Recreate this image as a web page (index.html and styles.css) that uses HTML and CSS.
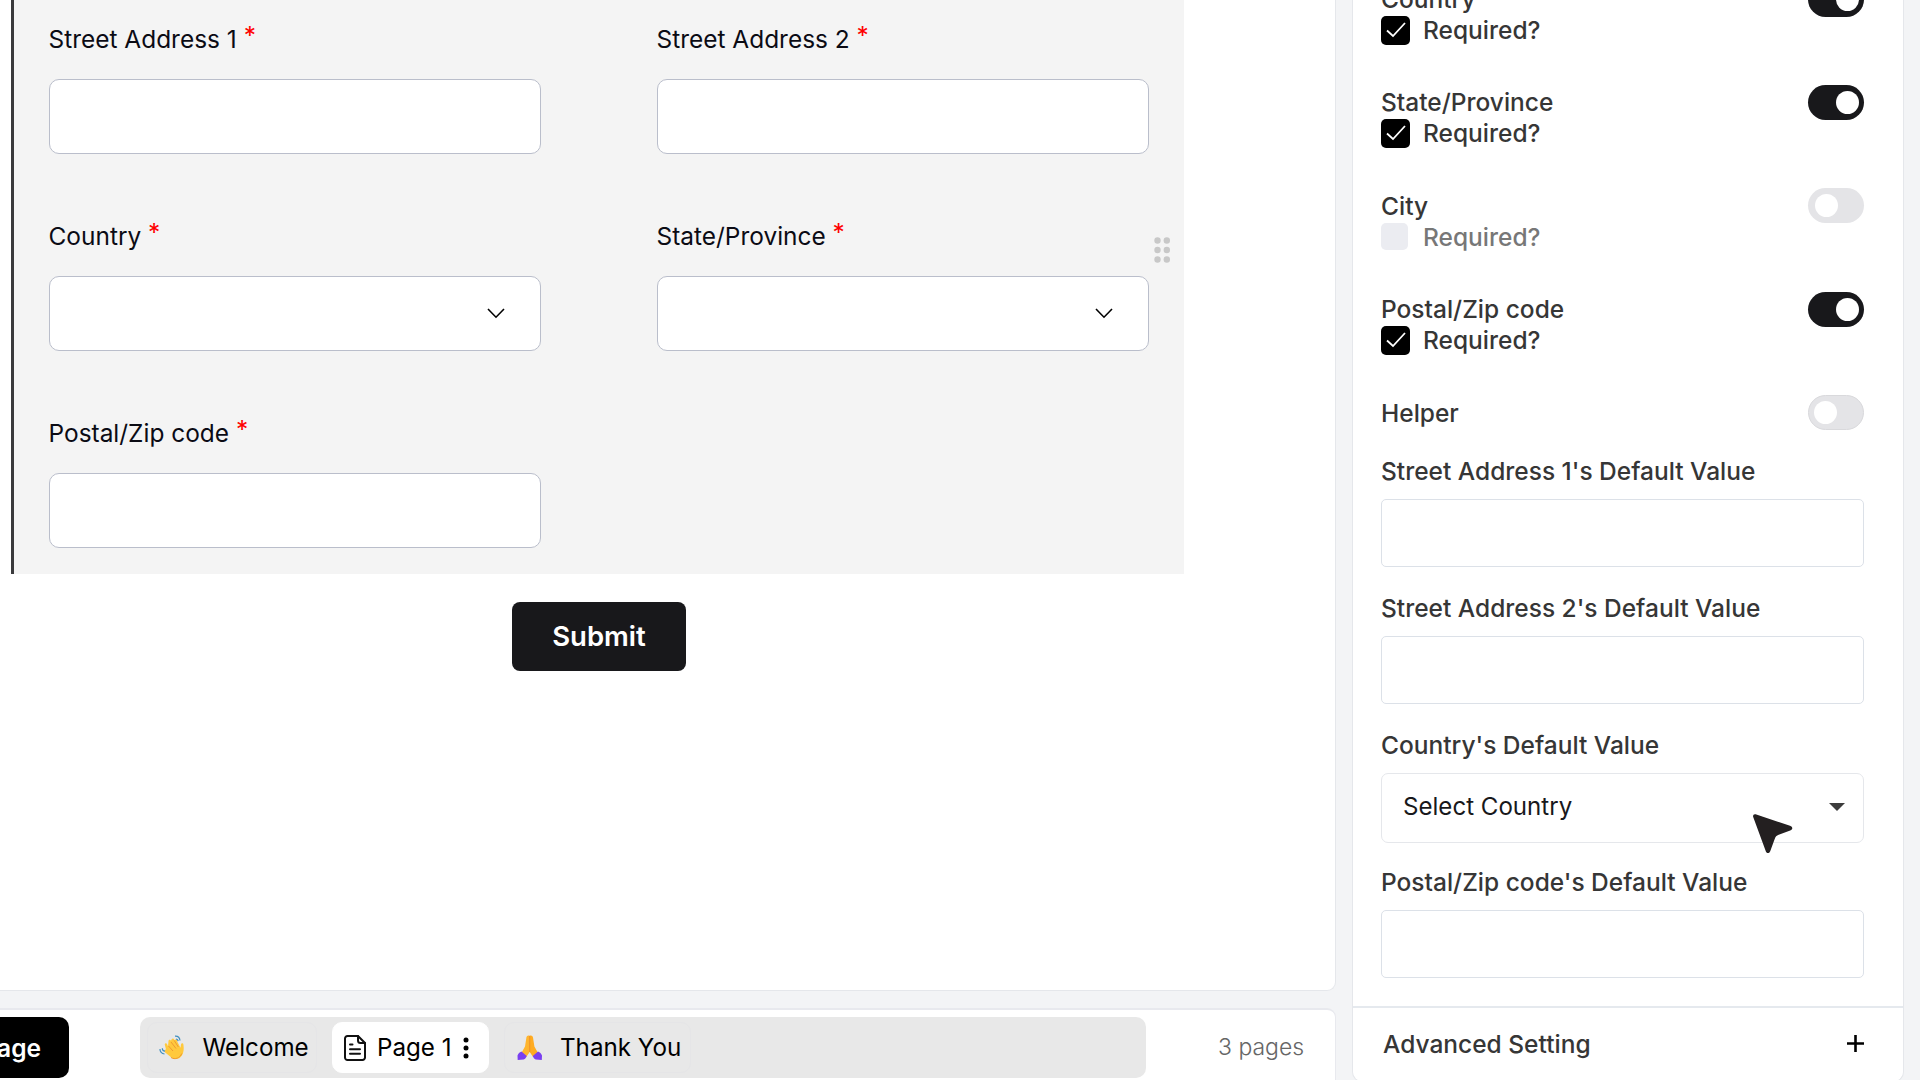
FILE: index.html
```html
<!DOCTYPE html>
<html lang="en">
<head>
    <meta charset="UTF-8">
    <meta name="viewport" content="width=device-width, initial-scale=1.0">
    <title>Form Builder</title>
    <link rel="stylesheet" href="styles.css">
</head>
<body>
    <div class="app">
        <div class="left">
            <div class="canvas">
                <div class="block">
                    <div class="field">
                        <label>Street Address 1 <span class="star">*</span></label>
                        <div class="input"></div>
                    </div>
                    <div class="field">
                        <label>Street Address 2 <span class="star">*</span></label>
                        <div class="input"></div>
                    </div>
                    <div class="field">
                        <label>Country <span class="star">*</span></label>
                        <div class="input">
                            <svg width="18" height="11" viewBox="0 0 18 11" fill="none" stroke="#000" stroke-width="1.6"><path d="M1 1l8 8.2L17 1"/></svg>
                        </div>
                    </div>
                    <div class="field">
                        <label>State/Province <span class="star">*</span></label>
                        <div class="input">
                            <svg width="18" height="11" viewBox="0 0 18 11" fill="none" stroke="#000" stroke-width="1.6"><path d="M1 1l8 8.2L17 1"/></svg>
                        </div>
                    </div>
                    <div class="field">
                        <label>Postal/Zip code <span class="star">*</span></label>
                        <div class="input"></div>
                    </div>
                    <!-- drag handle -->
                    <svg class="drag" width="17" height="26" viewBox="0 0 17 26" fill="#c8c8c8">
                        <circle cx="3.5" cy="3.5" r="3.2"/><circle cx="12.8" cy="3.5" r="3.2"/>
                        <circle cx="3.5" cy="13" r="3.2"/><circle cx="12.8" cy="13" r="3.2"/>
                        <circle cx="3.5" cy="22.5" r="3.2"/><circle cx="12.8" cy="22.5" r="3.2"/>
                    </svg>
                </div>
                <button class="submit">Submit</button>
            </div>

            <div class="footer">
                <button class="add-page"><span>+ Add Page</span></button>
                <div class="tabs">
                    <div class="tab welcome">
                        <svg width="26" height="26" viewBox="0 0 26 26" fill="none">
                            <path d="M7 14.5L5.8 9.8c-.4-1.6 1.6-2.3 2.2-.9l1 2.3L9.5 6c.1-1.6 2.1-1.6 2.4-.2l.8-1.6c.8-1.3 2.5-.6 2.4.8l1.6-.5c1.3-.3 2 1 1.5 2.1l3.3 6.2.5-3.4c.3-1.5 2.2-1.3 2.4.1.6 4 .5 7.8-1.5 11-2.5 4-7.5 4.7-10.9 1.7L6.2 17.6c-1.4-1.4-.4-3 .8-3.1z" fill="#ffc93d"/>
                            <path d="M9.5 11l4.5 5M12 7l5 6.5M15.2 5.5l4.2 6.5M12 22.5c4 2.6 9 .5 10.8-4" stroke="#ef9a32" stroke-width="1"/>
                            <path d="M16 1.2c2.6-.2 4.7 1.6 5 4.3M17 4c1.3.1 2 .9 2.2 2.2M1 14c-.2 2.6 1.8 4.8 4.5 5M3.3 13.2c0 1.8 1 2.8 2.7 3" stroke="#3f8fc0" stroke-width="1.2"/>
                        </svg>
                        <span>Welcome</span>
                    </div>
                    <div class="tab page active">
                        <svg width="22" height="26" viewBox="0 0 22 26" fill="none" stroke="#111" stroke-width="2" stroke-linejoin="round" stroke-linecap="round">
                            <path d="M14 1H3.5A2.5 2.5 0 0 0 1 3.5v19A2.5 2.5 0 0 0 3.5 25h15a2.5 2.5 0 0 0 2.5-2.5V8z"/>
                            <path d="M14 1v4.5A2.5 2.5 0 0 0 16.5 8H21M6 9.5h2.5M6 14.2h10M6 18.8h10"/>
                        </svg>
                        <span>Page 1</span>
                        <svg class="more" width="6" height="22" viewBox="0 0 6 22"><circle cx="3" cy="3" r="2.5"/><circle cx="3" cy="11" r="2.5"/><circle cx="3" cy="19" r="2.5"/></svg>
                    </div>
                    <div class="tab thanks">
                        <svg width="26" height="26" viewBox="0 0 26 26">
                            <path d="M12.7.8c-1.5-.9-3 0-3.3 1.6L8 11.5l-3.5 6.2 4.8 4.3 3.4-5z" fill="#ffb52e"/>
                            <path d="M12.7.8c1.5-.9 3 0 3.3 1.6l1.4 9.1 3.5 6.2-4.8 4.3-3.4-5z" fill="#ffac22"/>
                            <path d="M12.7 1v16" stroke="#ef8f22" stroke-width="1"/>
                            <path d="M4.5 16.5l5.2 4.5c-.7 2-1.5 3-3 3.5L.7 25l-.2-4.5c.7-2 2-3.3 4-4zM21 16.5L15.8 21c.7 2 1.5 3 3 3.5l6 .5.2-4.5c-.7-2-2-3.3-4-4z" fill="#7a3ff0"/>
                        </svg>
                        <span>Thank You</span>
                    </div>
                </div>
                <span class="count">3 pages</span>
            </div>
        </div>

        <div class="panel">
            <div class="settings">
                <div class="option">
                    <div class="option-head"><span>Country</span><i class="toggle on"></i></div>
                    <div class="required"><i class="check"><svg width="20" height="16" viewBox="0 0 20 16" fill="none" stroke="#fff" stroke-width="1.8"><path d="M1 8.5l6 5.5L19 1"/></svg></i>Required?</div>
                </div>
                <div class="option">
                    <div class="option-head"><span>State/Province</span><i class="toggle on"></i></div>
                    <div class="required"><i class="check"><svg width="20" height="16" viewBox="0 0 20 16" fill="none" stroke="#fff" stroke-width="1.8"><path d="M1 8.5l6 5.5L19 1"/></svg></i>Required?</div>
                </div>
                <div class="option">
                    <div class="option-head"><span>City</span><i class="toggle"></i></div>
                    <div class="required off"><i class="check"></i>Required?</div>
                </div>
                <div class="option">
                    <div class="option-head"><span>Postal/Zip code</span><i class="toggle on"></i></div>
                    <div class="required"><i class="check"><svg width="20" height="16" viewBox="0 0 20 16" fill="none" stroke="#fff" stroke-width="1.8"><path d="M1 8.5l6 5.5L19 1"/></svg></i>Required?</div>
                </div>
                <div class="option helper">
                    <div class="option-head"><span>Helper</span><i class="toggle outlined"></i></div>
                </div>

                <div class="default">
                    <label>Street Address 1's Default Value</label>
                    <div class="box"></div>
                </div>
                <div class="default">
                    <label>Street Address 2's Default Value</label>
                    <div class="box"></div>
                </div>
                <div class="default">
                    <label>Country's Default Value</label>
                    <div class="box select">
                        <span>Select Country</span>
                        <svg width="16" height="8" viewBox="0 0 16 8" fill="#3c3c3c"><path d="M0 0h16L8 8z"/></svg>
                    </div>
                </div>
                <div class="default">
                    <label>Postal/Zip code's Default Value</label>
                    <div class="box"></div>
                </div>
            </div>
            <div class="advanced">
                <span>Advanced Setting</span>
                <svg width="17" height="17" viewBox="0 0 17 17" stroke="#000" stroke-width="2.6"><path d="M8.5 0v17M0 8.5h17"/></svg>
            </div>
        </div>
    </div>

    <svg class="cursor" width="40" height="40" viewBox="0 0 40 40" fill="#231f20">
        <path d="M2.6.3L37 11.8c3 1 3 3.6.2 4.7l-11.500 4.200c-2.200.8-3.300 2-4 4.200l-4.500 12.300c-1 2.500-3.700 2.500-4.500-.2L.2 3C-.3 1.200.8-.2 2.600.3z"/>
    </svg>
</body>
</html>
```

FILE: styles.css
```css
* {
    box-sizing: border-box;
}

body {
    margin: 0;
    height: 1080px;
    overflow: hidden;
    background-color: #f3f4f6;
    font-family: Inter, "Liberation Sans", sans-serif;
    font-size: 24.5px;
    line-height: 30px;
    color: #0b0b14;
}

button {
    border: none;
    font-family: inherit;
    color: #fff;
}

svg {
    display: block;
    flex-shrink: 0;
}

.app {
    display: flex;
    height: 1080px;
}

.left {
    width: 1336px;
    display: flex;
    flex-direction: column;
    gap: 17px;
}

/* form canvas */
.canvas {
    height: 991px;
    flex-shrink: 0;
    background: #fff;
    border: 1px solid #e5e7eb;
    border-width: 0 1px 1px 0;
    border-bottom-right-radius: 9px;
}

.block {
    position: relative;
    width: 1172.5px;
    height: 574px;
    margin-left: 11px;
    padding: 24px 34px 0 34.5px;
    background: #f4f4f4;
    border-left: 3px solid #3a3a3c;
    display: grid;
    grid-template-columns: 492px 492px;
    grid-auto-rows: 130px;
    gap: 67px 116px;
    align-content: start;
}

.field label {
    display: block;
    height: 55px;
    font-size: 24.45px;
    white-space: nowrap;
}

.star {
    color: #ff0000;
    line-height: 0;
    vertical-align: 4px;
}

.input {
    height: 75px;
    background: #fff;
    border: 1.5px solid #babecb;
    border-radius: 10px;
    display: flex;
    align-items: center;
    justify-content: flex-end;
    padding-right: 35px;
}

.drag {
    position: absolute;
    top: 237px;
    right: 13px;
}

.submit {
    display: block;
    width: 174px;
    height: 69px;
    margin: 28px 0 0 512px;
    padding: 0 0 1px;
    background: #18181b;
    border-radius: 8px;
    font-size: 27.5px;
    font-weight: 600;
}

/* page bar */
.footer {
    height: 90px;
    flex-shrink: 0;
    background: #fff;
    border: 2px solid #e8e9ee;
    border-width: 2px 1px 0 0;
    border-top-right-radius: 9px;
    display: flex;
    align-items: flex-start;
    padding-top: 7px;
}

.add-page {
    width: 69px;
    height: 61px;
    padding: 0 28px 0 0;
    background: #000;
    border-radius: 0 10px 10px 0;
    display: flex;
    justify-content: flex-end;
    align-items: center;
    overflow: hidden;
    white-space: nowrap;
    font-size: 24.5px;
    font-weight: 600;
}

.tabs {
    width: 1006px;
    height: 61px;
    margin-left: 71px;
    padding: 5px 7px;
    background: #e8e8e8;
    border-radius: 10px;
    display: flex;
}

.tab {
    height: 51px;
    border: 1px solid #e5e5e7;
    border-radius: 10px;
    display: flex;
    align-items: center;
    font-size: 24.2px;
    color: #000;
    white-space: nowrap;
}

.welcome {
    width: 170px;
    padding-left: 11px;
    gap: 17.5px;
}

.page {
    width: 157px;
    margin: 0 15px;
    padding-left: 11px;
    gap: 11px;
}

.active {
    background: #fff;
    border-color: #fff;
}

.thanks {
    width: 187px;
    padding-left: 12px;
    gap: 17px;
}

.count {
    margin: 15px 0 0 72px;
    font-size: 23px;
    font-weight: 300;
    color: #666;
}

/* right panel, scrolled a little past its top */
.panel {
    width: 552px;
    height: 1099px;
    flex-shrink: 0;
    margin: -17px 0 0 16px;
    background: #fff;
    border: 1px solid #e5e7eb;
    border-top: none;
    border-radius: 0 0 10px 10px;
    font-weight: 500;
    color: #363636;
}

.settings {
    height: 1025px;
    padding: 0 39px 0 28px;
    border-bottom: 2px solid #e5e9ee;
}

.option {
    height: 103.4px;
}

.option-head {
    height: 32px;
    display: flex;
    align-items: center;
    justify-content: space-between;
}

.toggle {
    width: 56px;
    height: 35px;
    flex-shrink: 0;
    padding: 6px 7px;
    background: #e4e4e7;
    border-radius: 18px;
    display: flex;
}

.toggle::before {
    content: "";
    width: 23px;
    height: 23px;
    background: #fff;
    border-radius: 50%;
}

.toggle.on {
    padding: 6px 5.5px;
    background: #18181b;
    justify-content: flex-end;
}

.toggle.outlined {
    padding: 5px;
    border: 1px solid #d9d9dc;
}

.required {
    display: flex;
    align-items: center;
    gap: 13px;
    height: 30px;
}

.check {
    width: 29px;
    height: 29px;
    background: #000;
    border-radius: 5px;
    display: flex;
    align-items: center;
    justify-content: center;
}

.off {
    color: #777;
}

.off .check {
    width: 27px;
    height: 27px;
    margin-right: 2px;
    background: #ebecf1;
}

.helper {
    height: 59px;
}

.default {
    height: 137px;
}

.default label {
    display: block;
    height: 43px;
}

.box {
    height: 68px;
    border: 1.5px solid #dce1e8;
    border-radius: 5px;
}

.select {
    height: 70px;
    border-color: #e5e7eb;
    border-radius: 7px;
    padding: 0 18px 2px 21px;
    display: flex;
    align-items: center;
    justify-content: space-between;
    font-size: 24.1px;
    font-weight: 400;
    color: #18181b;
}

.advanced {
    height: 73px;
    padding: 0 39px 2px 30px;
    display: flex;
    align-items: center;
    justify-content: space-between;
}

.cursor {
    position: absolute;
    left: 1753px;
    top: 814px;
}
```
